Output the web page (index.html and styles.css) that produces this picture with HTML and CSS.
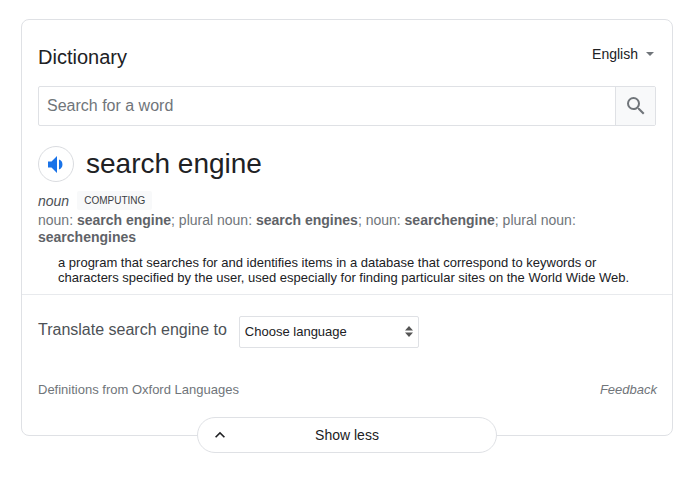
FILE: index.html
```html
<!DOCTYPE html>
<html lang="en">
<head>
<meta charset="utf-8">
<title>Dictionary</title>
<link rel="stylesheet" href="styles.css">
</head>
<body>
<main class="card">
  <header class="head">
    <h2 class="title">Dictionary</h2>
    <div class="lang">English<span class="caret"></span></div>
  </header>
  <div class="search">
    <div class="search-input">Search for a word</div>
    <div class="search-btn">
      <svg width="24" height="24" viewBox="0 0 24 24"><path fill="#70757a" d="M15.5 14h-.79l-.28-.27A6.47 6.47 0 0 0 16 9.5 6.5 6.5 0 1 0 9.5 16c1.61 0 3.09-.59 4.23-1.57l.27.28v.79l5 4.99L20.49 19l-4.99-5zm-6 0C7.01 14 5 11.99 5 9.5S7.01 5 9.5 5 14 7.01 14 9.5 11.99 14 9.5 14z"/></svg>
    </div>
  </div>
  <div class="word">
    <div class="speaker">
      <svg width="17" height="17" viewBox="0 0 17 17"><path fill="#1a73e8" d="M0 5.5v6h3.5L9 17V0L3.5 5.5H0zM11 3.6v9.8a5.2 5.2 0 0 0 0-9.8z"/></svg>
    </div>
    <h3 class="term">search engine</h3>
  </div>
  <div class="pos"><i>noun</i><span class="tag">COMPUTING</span></div>
  <p class="forms">noun: <b>search engine</b>; plural noun: <b>search engines</b>; noun: <b>searchengine</b>; plural noun: <b>searchengines</b></p>
  <p class="def">a program that searches for and identifies items in a database that correspond to keywords or characters specified by the user, used especially for finding particular sites on the World Wide Web.</p>
  <div class="translate">
    <span class="translate-label">Translate search engine to</span>
    <div class="select">Choose language
      <svg width="8" height="11" viewBox="0 0 8 11"><path fill="#555" d="M4 0 8 4.5H0zM4 11 0 6.5h8z"/></svg>
    </div>
  </div>
  <footer class="foot">
    <span>Definitions from Oxford Languages</span>
    <i>Feedback</i>
  </footer>
  <button class="less">
    <svg class="less-icon" width="20" height="20" viewBox="0 0 24 24"><path fill="#202124" d="M7.41 15.41 12 10.83l4.59 4.58L18 14l-6-6-6 6z"/></svg>
    <span>Show less</span>
  </button>
</main>
</body>
</html>
```
FILE: styles.css
```css
* { box-sizing: border-box; }
html, body { margin: 0; background: #fff; }
body { font-family: "Liberation Sans", Arial, sans-serif; color: #202124; height: 477px; overflow: hidden; padding: 19px 20px 0 21px; }
.card { position: relative; height: 417px; border: 1px solid #dfe1e5; border-radius: 8px; padding: 0 16px; background: #fff; }
.head { display: flex; justify-content: space-between; height: 66px; }
.title { margin: 24px 0 0; font-size: 20px; font-weight: 400; line-height: 26px; color: #202124; }
.lang { display: flex; margin-top: 24px; height: 20px; font-size: 14px; line-height: 20px; }
.caret { width: 0; height: 0; margin: 8px 2px 0 8px; border: 4px solid transparent; border-top: 4px solid #70757a; border-bottom: 0; }
.search { display: flex; height: 40px; border: 1px solid #dfe1e5; border-radius: 2px; }
.search-input { flex: 1; padding-left: 8px; font-size: 16px; line-height: 37px; color: #70757a; }
.search-btn { display: flex; align-items: center; justify-content: center; width: 40px; background: #f8f9fa; border-left: 1px solid #dfe1e5; }
.word { display: flex; align-items: center; gap: 12px; margin-top: 20px; height: 36px; }
.speaker { display: flex; align-items: center; justify-content: center; width: 36px; height: 36px; border: 1px solid #dadce0; border-radius: 50%; }
.term { margin: 0; font-size: 28px; font-weight: 400; line-height: 36px; color: #202124; }
.pos { display: flex; align-items: center; margin-top: 9px; height: 19px; font-size: 14px; }
.pos i { color: #4d5156; }
.tag { margin-left: 8px; padding: 0 7px; height: 19px; font-size: 10px; line-height: 19px; background: #f8f9fa; border-radius: 2px; color: #3c4043; }
.forms { margin: 2px 0 0; font-size: 14px; line-height: 17px; color: #70757a; width: 560px; }
.forms b { color: #5f6368; }
.def { margin: 9px 0 0 20px; font-size: 13px; line-height: 15px; color: #202124; width: 590px; }
.translate { display: flex; align-items: flex-start; margin: 9px -16px 0; padding: 21px 16px 0; border-top: 1px solid #e8eaed; }
.translate-label { font-size: 16px; line-height: 28px; color: #4d5156; }
.select { display: flex; align-items: center; justify-content: space-between; width: 180px; height: 32px; margin-left: 12px; padding: 0 5px 1px 5px; border: 1px solid #dfe1e5; border-radius: 2px; font-size: 13px; color: #202124; }
.foot { display: flex; justify-content: space-between; margin-top: 34px; font-size: 13px; line-height: 16px; color: #70757a; }
.foot span, .foot i { display: block; }
.foot i { margin-right: -1px; }
.less { position: absolute; left: 175px; top: 397px; display: block; width: 300px; height: 36px; padding: 0; border: 1px solid #dfe1e5; border-radius: 18px; background: #fff; font: 14px/34px "Liberation Sans", Arial, sans-serif; color: #202124; text-align: center; }
.less-icon { position: absolute; left: 12px; top: 7px; }
```
